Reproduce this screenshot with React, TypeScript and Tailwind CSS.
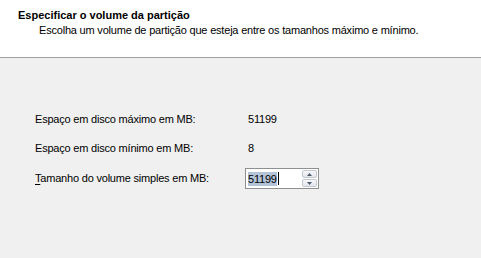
import React from "react";

const font = { fontFamily: '"Liberation Sans", Arial, sans-serif' };

function Spinner() {
  return (
    <div className="flex w-[16px] flex-col gap-px py-px pr-px">
      <button
        type="button"
        className="flex h-[9px] items-center justify-center rounded-[2px] border border-[#c4c9d1] bg-gradient-to-b from-[#f7f8fa] to-[#e2e5ea]"
      >
        <svg width="5" height="3" viewBox="0 0 5 3">
          <path d="M0 3 L2.5 0 L5 3 Z" fill="#4d5a6b" />
        </svg>
      </button>
      <button
        type="button"
        className="flex h-[9px] items-center justify-center rounded-[2px] border border-[#c4c9d1] bg-gradient-to-b from-[#f7f8fa] to-[#e2e5ea]"
      >
        <svg width="5" height="3" viewBox="0 0 5 3">
          <path d="M0 0 L2.5 3 L5 0 Z" fill="#4d5a6b" />
        </svg>
      </button>
    </div>
  );
}

export default function App() {
  return (
    <div
      className="flex h-[258px] w-[481px] flex-col bg-[#f0f0f0] text-[11px] tracking-[-0.2px] text-black"
      style={font}
    >
      <div className="h-[58px] border-b border-[#a0a0a0] bg-white pl-[18px] pt-[9px]">
        <div className="font-bold leading-[13px] tracking-normal">Especificar o volume da partição</div>
        <div className="mt-[2px] pl-[21px] leading-[13px]">
          Escolha um volume de partição que esteja entre os tamanhos máximo e mínimo.
        </div>
      </div>
      <div className="flex flex-col pl-[35px] pt-[50px]">
        <div className="flex h-[22px] items-center">
          <span className="w-[213px]">Espaço em disco máximo em MB:</span>
          <span>51199</span>
        </div>
        <div className="mt-[7px] flex h-[22px] items-center">
          <span className="w-[213px]">Espaço em disco mínimo em MB:</span>
          <span>8</span>
        </div>
        <div className="mt-[9px] flex h-[21px] items-center">
          <span className="w-[210px]">
            <span className="underline underline-offset-2">T</span>amanho do volume simples em MB:
          </span>
          <div className="flex h-[21px] w-[74px] items-stretch border border-[#8e8f8f] bg-white">
            <div className="flex flex-1 items-center pl-[2px]">
              <span className="bg-[#b4c4d8] leading-[14px]">51199</span>
              <span className="ml-px h-[13px] w-px bg-black" />
            </div>
            <Spinner />
          </div>
        </div>
      </div>
    </div>
  );
}
